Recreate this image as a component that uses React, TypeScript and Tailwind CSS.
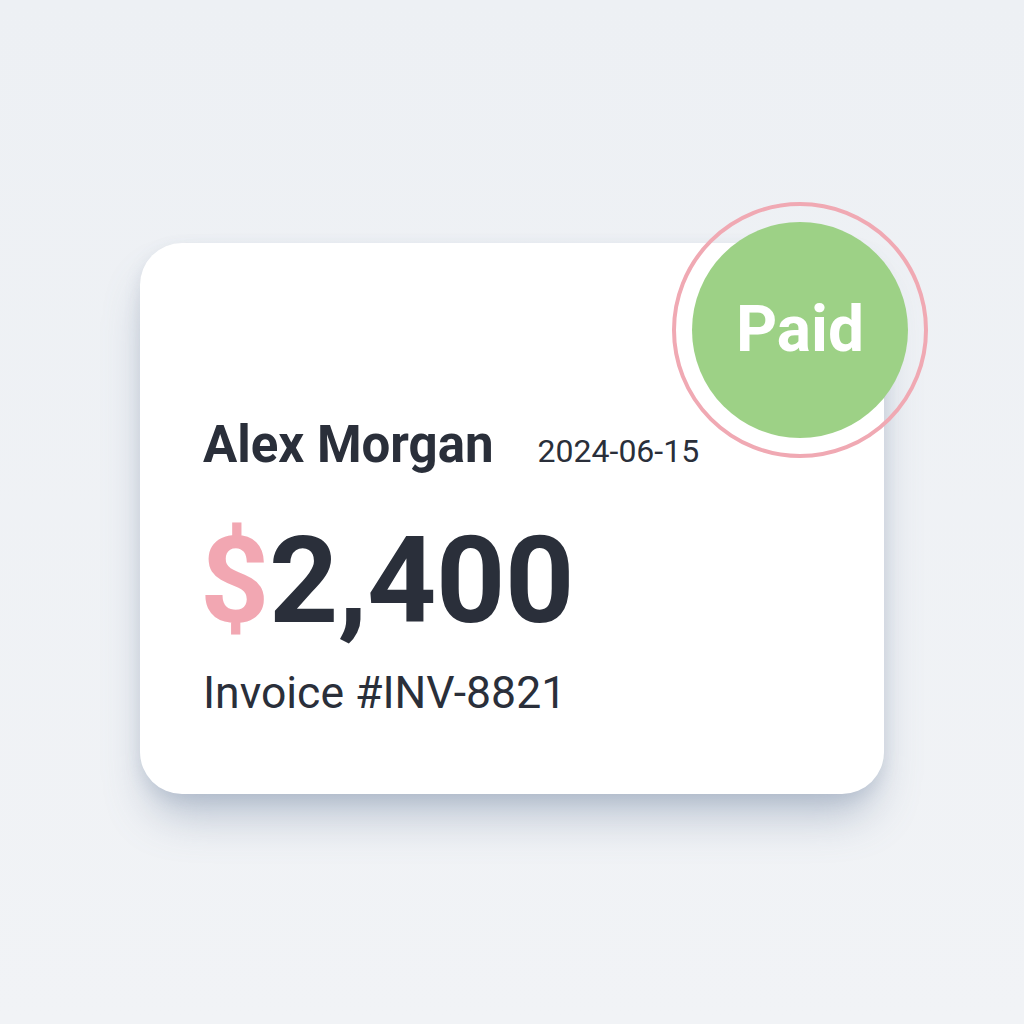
import React from "react";

export default function App() {
  return (
    <div
      className="w-[1024px] h-[1024px] bg-[linear-gradient(180deg,#edf0f4_0%,#f1f3f6_100%)] flex justify-center pt-[243px]"
      style={{ fontFamily: "Roboto, 'Noto Sans', sans-serif" }}
    >
      <div className="relative w-[744px] h-[551px] bg-white rounded-[42px] shadow-[0_30px_45px_-10px_rgba(110,130,160,0.45),0_6px_16px_rgba(120,140,165,0.18)] pl-[63px] pt-[176px]">
        <div className="flex items-baseline gap-[44px]">
          <span className="text-[51px] leading-none font-bold text-[#2a2f3a]">Alex Morgan</span>
          <span className="text-[32px] leading-none text-[#2a2f3a]">2024-06-15</span>
        </div>
        <div className="mt-[51px] -ml-[3px] text-[121px] leading-none font-bold text-[#2a2f3a] tracking-[-0.5px]">
          <span className="text-[#f2a7b2]">$</span>2,400
        </div>
        <div className="mt-[29px] text-[44.5px] leading-none text-[#2a2f3a]">Invoice #INV-8821</div>

        <div className="absolute left-[532px] top-[-41px] w-[256px] h-[256px] rounded-full border-[4px] border-[#f0a9b3] flex items-center justify-center">
          <div className="w-[216px] h-[216px] rounded-full bg-[#9dd186] flex items-center justify-center">
            <span className="text-white font-bold text-[64px] leading-none">Paid</span>
          </div>
        </div>
      </div>
    </div>
  );
}
